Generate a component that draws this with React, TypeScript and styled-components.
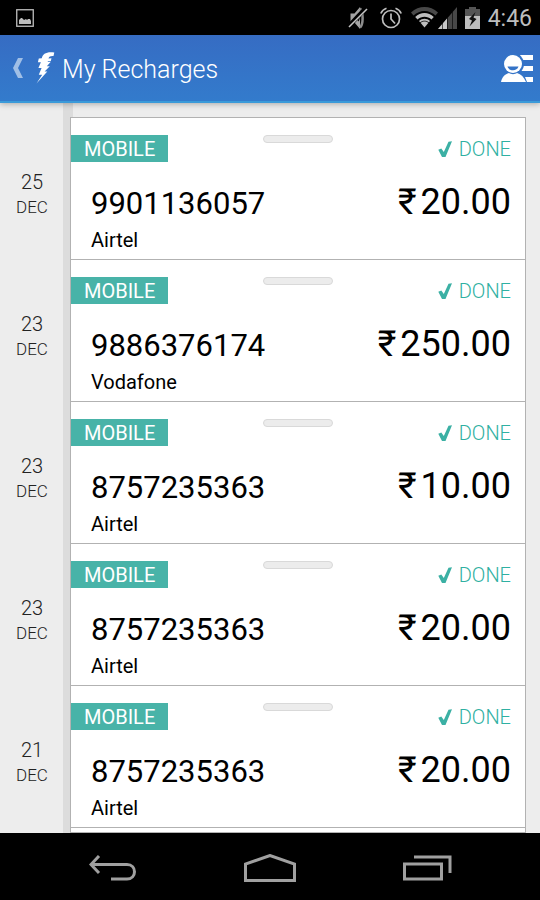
import React from "react";
import styled, { createGlobalStyle } from "styled-components";

const GlobalStyle = createGlobalStyle`
  *, *::before, *::after { box-sizing: border-box; }
  body { margin: 0; background: #ededed; font-family: Roboto, "Noto Sans", sans-serif; }
  ul, h1, p { margin: 0; padding: 0; }
  button { border: 0; padding: 0; background: none; font: inherit; cursor: pointer; }
  svg { display: block; }
`;

const Screen = styled.div`
  display: flex;
  flex-direction: column;
  height: 100vh;
  overflow: hidden;
`;

const StatusBar = styled.div`
  flex: none;
  display: flex;
  align-items: center;
  justify-content: space-between;
  height: 35px;
  padding: 0 8px 0 16px;
  background: #000;
  color: #bebebe;
`;

const StatusIcons = styled.div`
  display: flex;
  align-items: center;
`;

const StatusIcon = styled.svg<{ $gap?: number }>`
  margin-right: ${(p) => p.$gap ?? 0}px;
`;

const Clock = styled.time`
  padding-top: 2px;
  font-size: 23px;
  line-height: 34px;
`;

const Header = styled.header`
  flex: none;
  position: relative;
  z-index: 1;
  display: flex;
  align-items: center;
  height: 68px;
  padding: 0 7px 0 12px;
  border-bottom: 2px solid #3a9ad9;
  background: linear-gradient(#366cc3, #337bcc);
  box-shadow: 0 1px 6px rgba(0, 0, 0, 0.3);
  color: #fff;
`;

const BackButton = styled.button`
  display: flex;
  align-items: center;
  gap: 12px;
`;

const Title = styled.h1`
  flex: 1;
  margin-left: 7px;
  padding-top: 4px;
  font-size: 25px;
  font-weight: 300;
  line-height: 32px;
`;

const IconButton = styled.button`
  padding-top: 2px;
  color: #fff;
`;

const Content = styled.main`
  flex: 1;
  min-height: 0;
  overflow: hidden;
  display: flex;
  flex-direction: column;
  padding: 14px 14px 0 0;
  background: linear-gradient(90deg, #ededed 63px, #dcdcdc 63px, #dcdcdc 73px, #ededed 73px);
`;

const History = styled.ul`
  flex: 1;
  display: flex;
  flex-direction: column;
  list-style: none;
`;

const Entry = styled.li`
  flex: none;
  display: flex;
  height: 142px;
`;

const ListEnd = styled.li`
  flex: 1;
  margin-left: 70px;
  border: 1px solid #b2b2b2;
  background: #fff;
`;

const DateCell = styled.div`
  display: flex;
  flex-direction: column;
  width: 64px;
  margin-right: 6px;
  padding-top: 53px;
  text-align: center;
  color: #222;
`;

const Day = styled.span`
  font-size: 20px;
  font-weight: 300;
  line-height: 25px;
`;

const Month = styled.span`
  font-size: 17px;
  font-weight: 300;
  line-height: 25px;
`;

const Card = styled.article`
  flex: 1;
  display: flex;
  flex-direction: column;
  border: 1px solid #b2b2b2;
  border-bottom: 0;
  background: #fff;
  color: #000;
`;

const CardTop = styled.div`
  display: grid;
  grid-template-columns: 1fr 70px 1fr;
  align-items: start;
  padding-top: 17px;
`;

const Tag = styled.span`
  justify-self: start;
  height: 27px;
  padding: 0 13px;
  background: #48b3a8;
  color: #fff;
  font-size: 20px;
  line-height: 28px;
`;

const Handle = styled.span`
  height: 8px;
  border: 1px solid #d9d9d9;
  border-radius: 4px;
  background: #ececec;
`;

const Status = styled.span`
  justify-self: end;
  display: flex;
  align-items: center;
  gap: 7px;
  padding-right: 14px;
  color: #2fb0a2;
  font-size: 20px;
  font-weight: 300;
  line-height: 28px;
`;

const Details = styled.div`
  display: flex;
  justify-content: space-between;
  padding: 19px 14px 0 20px;
`;

const PhoneNumber = styled.p`
  font-size: 31px;
  line-height: 44px;
`;

const Operator = styled.p`
  padding-left: 20px;
  font-size: 20px;
  line-height: 28px;
`;

const Amount = styled.p`
  display: flex;
  gap: 4px;
  font-size: 36px;
  line-height: 40px;
`;

const NavBar = styled.nav`
  flex: none;
  display: flex;
  align-items: center;
  height: 67px;
  padding: 2px 34px 0;
  background: #000;
  color: #a0a0a0;
`;

const NavButton = styled.button`
  display: flex;
  justify-content: center;
  flex: 1;
  color: inherit;
`;

type Recharge = { day: string; month: string; number: string; operator: string; amount: string };

const recharges: Recharge[] = [
  { day: "25", month: "DEC", number: "9901136057", operator: "Airtel", amount: "20.00" },
  { day: "23", month: "DEC", number: "9886376174", operator: "Vodafone", amount: "250.00" },
  { day: "23", month: "DEC", number: "8757235363", operator: "Airtel", amount: "10.00" },
  { day: "23", month: "DEC", number: "8757235363", operator: "Airtel", amount: "20.00" },
  { day: "21", month: "DEC", number: "8757235363", operator: "Airtel", amount: "20.00" },
];

const PictureIcon = () => (
  <svg width="18" height="18" viewBox="0 0 18 18" fill="none">
    <rect x="0.75" y="0.75" width="16.5" height="16.5" stroke="#bebebe" strokeWidth="1.3" />
    <path d="M3 15V11l2-2 1 0 1 1 1 1 2-1 1 1 1-1h2l1 2v3z" fill="#bebebe" />
  </svg>
);

const MuteIcon = () => (
  <StatusIcon $gap={12} width="20" height="24" viewBox="0 0 20 24">
    <path d="M2.500 7.500h4L12 1v22l-5.500-6.500h-4z" fill="#a4a4a4" />
    <path d="M12 2.500c3.500 3 3.500 16 0 19" fill="none" stroke="#8c8c8c" strokeWidth="2.500" />
    <path d="M10 9c1.500 1 1.500 5 0 6" fill="none" stroke="#000" strokeWidth="1.200" />
    <path d="M0 21L17 3" stroke="#000" strokeWidth="4.500" />
    <path d="M1 21L19 3" stroke="#c4c4c4" strokeWidth="1.600" />
  </StatusIcon>
);

const AlarmIcon = () => (
  <StatusIcon $gap={9} width="22" height="22" viewBox="0 0 22 22" fill="none" stroke="#bebebe" strokeWidth="1.7">
    <circle cx="11" cy="12" r="8.5" />
    <path d="M11 6.500V12l4 4.500" />
    <path d="M.8 6.500C2 3.500 4 2 6.500 1.200M21.200 6.500C20 3.500 18 2 15.500 1.200" />
  </StatusIcon>
);

const WifiIcon = () => (
  <StatusIcon width="27" height="21" viewBox="0 0 27 21">
    <path d="M0 5.500C8-1.800 19-1.800 27 5.500L24.500 8.500C18 2.500 9 2.500 2.500 8.500z" fill="#484848" />
    <path d="M4.200 10C9.500 4.800 17.500 4.800 22.800 10L20.500 12.500C16.500 8.800 10.500 8.800 6.500 12.500z" fill="#bebebe" />
    <path d="M8 14c3.200-2.900 7.800-2.900 11 0L13.500 20.500z" fill="#bebebe" />
    <path d="M9 15.800c2.600-2.200 6.400-2.200 9 0" fill="none" stroke="#000" strokeWidth=".8" />
  </StatusIcon>
);

const SignalIcon = () => (
  <StatusIcon $gap={8} width="19" height="22" viewBox="0 0 19 22">
    <path d="M0 22L19 0v22z" fill="#484848" />
    <path d="M0 22L9 11.500V22z" fill="#c8c8c8" />
    <path d="M4.500 16v6M9.500 11v11M14.500 5v17" stroke="#000" strokeOpacity=".6" />
  </StatusIcon>
);

const BatteryIcon = () => (
  <StatusIcon $gap={8} width="15" height="22" viewBox="0 0 15 22">
    <path d="M4 0h7v2h4v8H0V2h4z" fill="#555" />
    <path d="M0 9h15v13H0z" fill="#bebebe" />
    <path d="M10.500 5L4 12l3 1.500-2.500 6L11.500 12 8.500 10.500z" fill="#111" />
  </StatusIcon>
);

const BackChevron = () => (
  <svg width="12" height="20" viewBox="0 0 12 20">
    <path d="M6 0h5L6 10l5 10H6L1 10z" fill="#a0bfe6" />
  </svg>
);

const BoltLogo = () => (
  <svg width="19" height="32" viewBox="0 0 19 32">
    <path
      d="M18.300.5C11-.6 6.500 1.500 5.800 6.300L2.800 6.500l-.9 3.700h3L2.400 16h3.200L2.800 22.700h3.400L.5 31.500 11.300 19.500H8.600L13.800 14.300H10.800L14.800 9.800H11.600l.4-.7 2.800-.2.700-2.600-3 .2c.7-2 2.300-2.700 5-2.400z"
      fill="#fff"
    />
  </svg>
);

const ContactsIcon = () => (
  <svg width="33" height="30" viewBox="0 0 33 30">
    <path d="M20 1h13v5H22zM23 12h10v5H21zM25 23h8v5h-6z" fill="#fff" />
    <circle cx="13" cy="10" r="11" fill="#3473c7" />
    <circle cx="13" cy="10" r="9" fill="#fff" />
    <path d="M1 28c1-5 4-8 8-9 2 1.500 6 1.500 8 0 4 1 7 4 9 9z" fill="#fff" />
    <path d="M7.500 12.500h11c-1.500 5-9.500 5-11 0z" fill="#3473c7" />
  </svg>
);

const CheckIcon = () => (
  <svg width="14" height="17" viewBox="0 0 14 17">
    <path d="M.3 8.800L3.300 7.500 5.800 11 10.500.8 14 .2 7.500 16H4z" fill="#3bb0a4" />
  </svg>
);

const BackArrowIcon = () => (
  <svg width="48" height="26" viewBox="0 0 48 26" fill="none" stroke="currentColor" strokeWidth="3">
    <path d="M10 1L2 9.500 10 18M2 9.500H38c10 0 10 14.500 0 14.500H22" />
  </svg>
);

const HomeIcon = () => (
  <svg width="52" height="28" viewBox="0 0 52 28" fill="none" stroke="currentColor" strokeWidth="3">
    <path d="M1.500 26.500V10L26 1.500 50.500 10V26.500z" />
  </svg>
);

const RecentsIcon = () => (
  <svg width="49" height="26" viewBox="0 0 49 26" fill="none" stroke="currentColor" strokeWidth="3">
    <path d="M1.500 9h37v15h-37zM11 2h36v16" />
  </svg>
);

export default function App() {
  return (
    <Screen>
      <GlobalStyle />
      <StatusBar>
        <PictureIcon />
        <StatusIcons>
          <MuteIcon />
          <AlarmIcon />
          <WifiIcon />
          <SignalIcon />
          <BatteryIcon />
          <Clock>4:46</Clock>
        </StatusIcons>
      </StatusBar>
      <Header>
        <BackButton aria-label="Back">
          <BackChevron />
          <BoltLogo />
        </BackButton>
        <Title>My Recharges</Title>
        <IconButton aria-label="Account">
          <ContactsIcon />
        </IconButton>
      </Header>
      <Content>
        <History>
          {recharges.map((r, i) => (
            <Entry key={i}>
              <DateCell>
                <Day>{r.day}</Day>
                <Month>{r.month}</Month>
              </DateCell>
              <Card>
                <CardTop>
                  <Tag>MOBILE</Tag>
                  <Handle />
                  <Status>
                    <CheckIcon />
                    DONE
                  </Status>
                </CardTop>
                <Details>
                  <PhoneNumber>{r.number}</PhoneNumber>
                  <Amount>
                    <span>₹</span>
                    <span>{r.amount}</span>
                  </Amount>
                </Details>
                <Operator>{r.operator}</Operator>
              </Card>
            </Entry>
          ))}
          <ListEnd aria-hidden="true" />
        </History>
      </Content>
      <NavBar>
        <NavButton aria-label="Back">
          <BackArrowIcon />
        </NavButton>
        <NavButton aria-label="Home">
          <HomeIcon />
        </NavButton>
        <NavButton aria-label="Recent apps">
          <RecentsIcon />
        </NavButton>
      </NavBar>
    </Screen>
  );
}
